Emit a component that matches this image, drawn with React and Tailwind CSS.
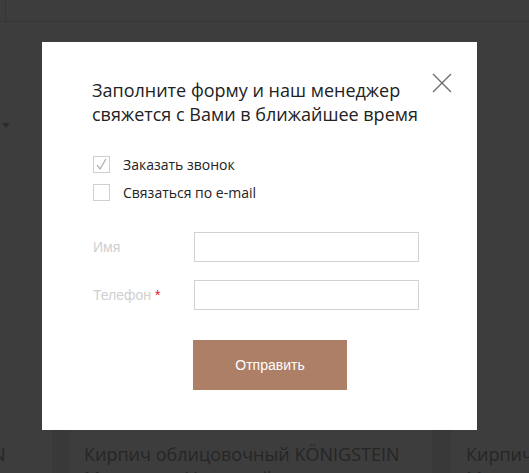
import React from 'react';

const CloseIcon = () => (
    <svg width="20" height="20" viewBox="0 0 20 20" className="block">
        <path d="M1 1 L19 19 M19 1 L1 19" stroke="#6b6b6b" strokeWidth="1.3" fill="none" />
    </svg>
);

const Checkbox = ({ checked, label }) => (
    <label className="flex items-center gap-[13px] h-[17px]">
        <span className="w-[17px] h-[17px] border border-[#d0d0d0] bg-white flex items-center justify-center">
            {checked && (
                <svg width="13" height="13" viewBox="0 0 13 13">
                    <path d="M2 7 L5 11 L11 1" stroke="#a8a8a8" strokeWidth="1.2" fill="none" />
                </svg>
            )}
        </span>
        <span className="text-[14px] text-[#222]">{label}</span>
    </label>
);

const Field = ({ label, required }) => (
    <div className="flex items-center">
        <span className="w-[101px] text-[14px] text-[#cfcfcf] font-['Liberation_Sans',Arial,sans-serif]">
            {label}
            {required && <span className="text-[#e4141e] ml-1">*</span>}
        </span>
        <input className="w-[225px] h-[30px] border border-[#d2d2d2] outline-none bg-white" />
    </div>
);

const App = () => {
    return (
        <div className="relative w-[529px] h-[473px] overflow-hidden bg-[#3d3d3d] font-['Open_Sans',sans-serif]">
            {/* dimmed page behind the popup */}
            <div className="h-[22px] border-b border-[#353535] flex">
                <div className="w-[6px] border-r border-[#353535]" />
            </div>
            <div className="h-[101px] pt-[101px] pl-[2px]">
                <div className="w-0 h-0 border-l-[4px] border-r-[4px] border-t-[5px] border-l-transparent border-r-transparent border-t-[#2c2c2c]" />
            </div>
            <div className="h-[306px]" />
            <div className="flex h-[44px] text-[18px] leading-[24px] text-[#262626] whitespace-nowrap">
                <div className="w-[52px] shrink-0 overflow-hidden pt-[13px]">
                    <div className="-ml-[8px]">N</div>
                </div>
                <div className="w-[18px] shrink-0 bg-[#393939]" />
                <div className="w-[362px] shrink-0 pl-[14px] pt-[13px]">
                    Кирпич облицовочный KÖNIGSTEIN
                    <div>Манчестер Угольный</div>
                </div>
                <div className="w-[19px] shrink-0 bg-[#393939]" />
                <div className="flex-1 min-w-0 overflow-hidden pl-[15px] pt-[13px]">
                    Кирпич
                    <div>Манчестер</div>
                </div>
            </div>

            {/* popup */}
            <div className="absolute left-[42px] top-[42px] w-[435px] h-[388px] bg-white pl-[50px] pt-[36px]">
                <button className="absolute right-[25px] top-[31px]">
                    <CloseIcon />
                </button>
                <h2 className="text-[18px] leading-[24px] text-[#222] font-normal">
                    Заполните форму и наш менеджер
                    <br />
                    свяжется с Вами в ближайшее время
                </h2>
                <div className="mt-[30px] flex flex-col gap-[11px] pl-[1px]">
                    <Checkbox checked label="Заказать звонок" />
                    <Checkbox label="Связаться по e-mail" />
                </div>
                <div className="mt-[31px] flex flex-col gap-[18px] pl-[1px]">
                    <Field label="Имя" />
                    <Field label="Телефон" required />
                </div>
                <button className="mt-[30px] ml-[101px] w-[154px] h-[50px] bg-[#ad7f66] text-white text-[14px] font-['Liberation_Sans',Arial,sans-serif]">
                    Отправить
                </button>
            </div>
        </div>
    );
};

export default App;
